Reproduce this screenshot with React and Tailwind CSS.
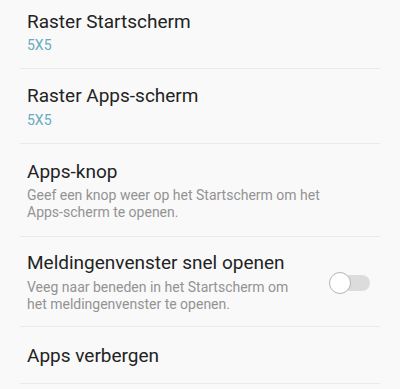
import React from "react";

function Divider() {
  return <div className="mx-[20px] h-px bg-[#ebebeb]" />;
}

export default function App() {
  const font = { fontFamily: "Roboto, 'Noto Sans', sans-serif" };
  return (
    <div className="w-[400px] h-[389px] overflow-hidden bg-[#f9f9f9]" style={font}>
      <div className="pl-[27px] pr-[30px] pt-[11px] pb-[14px]">
        <div className="text-[19px] leading-[22px] text-[#232323]">Raster Startscherm</div>
        <div className="mt-[4px] text-[14px] leading-[17px] text-[#67a9c1]">5X5</div>
      </div>
      <Divider />
      <div className="pl-[27px] pr-[30px] pt-[16px] pb-[14px]">
        <div className="text-[19px] leading-[22px] text-[#232323]">Raster Apps-scherm</div>
        <div className="mt-[5px] text-[14px] leading-[17px] text-[#67a9c1]">5X5</div>
      </div>
      <Divider />
      <div className="pl-[27px] pr-[30px] pt-[17px] pb-[15px]">
        <div className="text-[19px] leading-[22px] text-[#232323]">Apps-knop</div>
        <div className="mt-[4px] text-[14px] leading-[17px] text-[#939393]">
          Geef een knop weer op het Startscherm om het
          <br />
          Apps-scherm te openen.
        </div>
      </div>
      <Divider />
      <div className="flex items-center pl-[27px] pr-[30px] pt-[15px] pb-[13px]">
        <div className="flex-1">
          <div className="text-[19px] leading-[22px] text-[#232323]">Meldingenvenster snel openen</div>
          <div className="mt-[5px] text-[14px] leading-[17px] text-[#939393]">
            Veeg naar beneden in het Startscherm om
            <br />
            het meldingenvenster te openen.
          </div>
        </div>
        <div className="relative w-[41px] h-[22px]">
          <div className="absolute left-[2px] right-0 top-[3px] h-[16px] rounded-full bg-[#dcdcdc]" />
          <div className="absolute left-0 top-0 w-[22px] h-[22px] rounded-full bg-white border-[1.5px] border-[#b5b5b5]" />
        </div>
      </div>
      <Divider />
      <div className="pl-[27px] pr-[30px] pt-[18px] pb-[16px]">
        <div className="text-[19px] leading-[22px] text-[#232323]">Apps verbergen</div>
      </div>
      <Divider />
    </div>
  );
}
